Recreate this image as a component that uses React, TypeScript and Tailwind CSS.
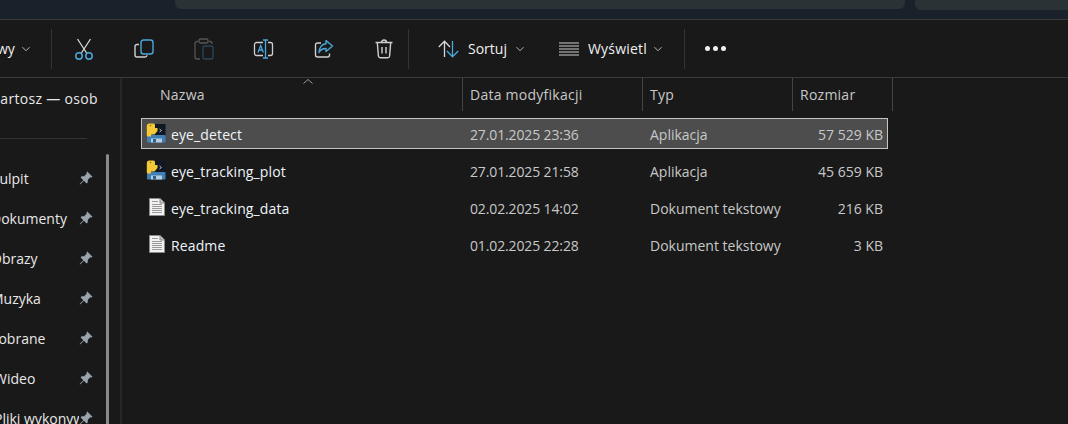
import React from "react";

const FONT = "font-['Open_Sans','Noto_Sans',sans-serif]";

function Chevron({ className = "" }: { className?: string }) {
  return (
    <svg width="8" height="6" viewBox="0 0 8 6" className={className} fill="none" stroke="#b8b8b8" strokeWidth="1">
      <path d="M0.5 1.2 4 4.7 7.5 1.2" />
    </svg>
  );
}

function Cut() {
  return (
    <svg width="20" height="22" viewBox="0 0 20 22" fill="none" strokeWidth="1.3">
      <path d="M3.5 1 12.6 15M16.5 1 7.4 15" stroke="#d8d8d8" />
      <circle cx="5" cy="18" r="3.2" stroke="#4aa8dc" strokeWidth="1.5" />
      <circle cx="15" cy="18" r="3.2" stroke="#4aa8dc" strokeWidth="1.5" />
    </svg>
  );
}

function Copy() {
  return (
    <svg width="20" height="20" viewBox="0 0 20 20" fill="none" strokeWidth="1.4">
      <path d="M5 5.5H3a2 2 0 0 0-2 2V16a2 2 0 0 0 2 2h8a2 2 0 0 0 2-1.8" stroke="#cfcfcf" />
      <rect x="7" y="1" width="12" height="14" rx="2.5" stroke="#4aa8dc" />
    </svg>
  );
}

function Paste() {
  return (
    <svg width="20" height="22" viewBox="0 0 20 22" fill="none" strokeWidth="1.3">
      <path d="M4 3.5H3a2 2 0 0 0-2 2V19a2 2 0 0 0 2 2h3M15 3.5h1a2 2 0 0 1 2 2V6" stroke="#555" />
      <rect x="5" y="1" width="9" height="4" rx="1.5" stroke="#555" />
      <rect x="9" y="8" width="10" height="13" rx="2" stroke="#28465a" />
    </svg>
  );
}

function Rename() {
  return (
    <svg width="22" height="20" viewBox="0 0 22 20" fill="none" strokeWidth="1.3">
      <path d="M10 3.5H3.5a2 2 0 0 0-2 2v9a2 2 0 0 0 2 2H10M15 3.5h2.5a2 2 0 0 1 2 2v9a2 2 0 0 1-2 2H15" stroke="#cfcfcf" />
      <path d="M12.5 1v18M10 1h5M10 19h5" stroke="#4aa8dc" />
      <path d="M5 13.5 7.7 6.5 10.4 13.5M6 11h3.4" stroke="#4aa8dc" />
    </svg>
  );
}

function Share() {
  return (
    <svg width="20" height="20" viewBox="0 0 20 20" fill="none" strokeWidth="1.4">
      <path d="M7 4H3.5a2 2 0 0 0-2 2v10a2 2 0 0 0 2 2h10a2 2 0 0 0 2-2v-1.5" stroke="#cfcfcf" />
      <path d="M12 1.5 18.5 7 12 12.5V9.5C9 9.5 6.5 10.5 5 13.5 5 8.5 8 5 12 4.7Z" stroke="#4aa8dc" strokeLinejoin="round" />
    </svg>
  );
}

function Trash() {
  return (
    <svg width="18" height="20" viewBox="0 0 18 20" fill="none" stroke="#d0d0d0" strokeWidth="1.4">
      <path d="M0.5 3.5h17M6.5 3.5C6.5 2 7.5 1 9 1s2.5 1 2.5 2.5M2.3 3.5 3.4 17a2 2 0 0 0 2 1.8h7.2a2 2 0 0 0 2-1.8l1.1-13.5M7 8v6.5M11 8v6.5" />
    </svg>
  );
}

function SortIcon() {
  return (
    <svg width="21" height="18" viewBox="0 0 21 18" fill="none" strokeWidth="1.3">
      <path d="M6.5 17V1.5M0.8 7 6.5 1.2 12 7" stroke="#d8d8d8" />
      <path d="M14.5 1v15.5M9 11l5.5 5.7L20.2 11" stroke="#4aa8dc" />
    </svg>
  );
}

function ViewIcon() {
  return (
    <svg width="20" height="14" viewBox="0 0 20 14" fill="none" stroke="#cfcfcf" strokeWidth="1">
      <path d="M0 1h20M0 4h20M0 7h20M0 10h20M0 13h20" />
    </svg>
  );
}

function Pin() {
  return (
    <svg width="14" height="14" viewBox="0 0 13 13" fill="#9aa3aa">
      <path d="M7.7 0.5 12.5 5.3 11.6 6 10.6 5.8 8.2 8.2 8.1 10.7 7 11.5 4.5 9 1 12.5 0.5 12 4 8.5 1.5 6 2.4 4.9 4.8 4.8 7.2 2.4 7 1.4Z" />
    </svg>
  );
}

function ExeIcon() {
  return (
    <svg width="20" height="20" viewBox="0 0 20 20">
      <rect x="6" y="1" width="13.5" height="12" fill="#101824" />
      <path d="M13.5 6 15.5 7.5 13.5 9" stroke="#c8c8c8" fill="none" strokeWidth="0.9" />
      <rect x="1" y="12" width="18.5" height="7.5" rx="0.8" fill="#3f7fb5" />
      <rect x="5" y="15.5" width="11" height="4" fill="#b5cde0" />
      <rect x="7" y="16" width="3" height="3.5" fill="#2f5f8a" />
      <path d="M3 0.5h4.5A1.5 1.5 0 0 1 9 2v3h2.5v3L8.5 11.5H5v2H2a1.2 1.2 0 0 1-1.2-1.2V3A2.5 2.5 0 0 1 3 0.5Z" fill="#f3c938" />
      <circle cx="4.5" cy="2.5" r="0.8" fill="#8a6a10" />
    </svg>
  );
}

function TextIcon() {
  return (
    <svg width="16" height="18" viewBox="0 0 16 18" className="ml-[3px]">
      <path d="M0.5 0.5H11L15.5 5V17.5H0.5Z" fill="#f2f2f2" stroke="#8a8a8a" />
      <path d="M11 0.5V5H15.5" fill="#c8c8c8" stroke="#8a8a8a" />
      <path d="M3 3.5h6M3 6.5h10M3 8.5h10M3 10.5h10M3 12.5h10M3 14.5h10" stroke="#9a9a9a" strokeWidth="1" />
    </svg>
  );
}

const SIDE_ITEMS = [
  { label: "Pulpit", ml: "-ml-[9px]" },
  { label: "Dokumenty", ml: "-ml-[9px]" },
  { label: "Obrazy", ml: "-ml-[9px]" },
  { label: "Muzyka", ml: "-ml-[9px]" },
  { label: "Pobrane", ml: "-ml-[10px]" },
  { label: "Wideo", ml: "-ml-[6px]" },
];

const FILES = [
  { name: "eye_detect", date: "27.01.2025 23:36", type: "Aplikacja", size: "57 529 KB", exe: true, selected: true },
  { name: "eye_tracking_plot", date: "27.01.2025 21:58", type: "Aplikacja", size: "45 659 KB", exe: true, selected: false },
  { name: "eye_tracking_data", date: "02.02.2025 14:02", type: "Dokument tekstowy", size: "216 KB", exe: false, selected: false },
  { name: "Readme", date: "01.02.2025 22:28", type: "Dokument tekstowy", size: "3 KB", exe: false, selected: false },
];

export default function App() {
  return (
    <div className={`${FONT} flex h-[424px] w-[1068px] flex-col overflow-hidden bg-[#191919] text-[14px] text-[#e8e8e8]`}>
      {/* tab strip remains */}
      <div className="flex h-[19px] shrink-0 items-start gap-[10px] bg-[#19222a] pl-[175px]">
        <div className="h-[9px] w-[730px] rounded-b-[6px] bg-[#293234]" />
        <div className="h-[10px] flex-1 rounded-bl-[6px] bg-[#293234]" />
      </div>

      {/* toolbar */}
      <div className="flex h-[59px] shrink-0 items-center border-y border-[#3a3a3a]">
        <div className="flex w-[51px] items-center overflow-hidden">
          <span className="-ml-[3px] w-[23px] text-[#f0f0f0]">wy</span>
          <Chevron className="ml-[2px]" />
        </div>
        <div className="h-[40px] w-px bg-[#333]" />
        <div className="ml-[2px] flex h-[32px] w-[60px] items-center justify-center"><Cut /></div>
        <div className="flex h-[32px] w-[60px] items-center justify-center"><Copy /></div>
        <div className="flex h-[32px] w-[60px] items-center justify-center"><Paste /></div>
        <div className="flex h-[32px] w-[60px] items-center justify-center"><Rename /></div>
        <div className="flex h-[32px] w-[60px] items-center justify-center"><Share /></div>
        <div className="flex h-[32px] w-[54px] items-center justify-center pl-[6px]"><Trash /></div>
        <div className="h-[40px] w-px bg-[#333]" />
        <div className="ml-[29px] flex items-center">
          <SortIcon />
          <span className="ml-[9px] text-[#f0f0f0]">Sortuj</span>
          <Chevron className="ml-[9px]" />
        </div>
        <div className="ml-[35px] flex items-center">
          <ViewIcon />
          <span className="ml-[9px] tracking-[0.2px] text-[#f0f0f0]">Wyświetl</span>
          <Chevron className="ml-[7px]" />
        </div>
        <div className="ml-[22px] h-[40px] w-px bg-[#333]" />
        <div className="ml-[20px] flex gap-[3px]">
          <span className="size-[5px] rounded-full bg-[#f0f0f0]" />
          <span className="size-[5px] rounded-full bg-[#f0f0f0]" />
          <span className="size-[5px] rounded-full bg-[#f0f0f0]" />
        </div>
      </div>

      <div className="flex min-h-0 flex-1">
        {/* navigation pane */}
        <div className="relative h-full w-[120px] shrink-0 overflow-hidden">
          <div className="flex h-[29px] items-end whitespace-nowrap tracking-[0.3px] text-[#e8e8e8]">
            <span className="-ml-[9px] mb-[-2px]">Bartosz — osob</span>
          </div>
          <div className="mt-[31px] h-px w-[87px] bg-[#333]" />
          <div className="-mt-px pt-[20px]">
            <div className="flex w-[93px] flex-col">
              {SIDE_ITEMS.map((item) => (
                <div key={item.label} className="flex h-[40px] items-center justify-between whitespace-nowrap">
                  <span className={item.ml}>{item.label}</span>
                  <Pin />
                </div>
              ))}
              <div className="relative flex h-[40px] items-center justify-between whitespace-nowrap">
                <span className="-ml-[6px] w-[85px] overflow-hidden">Pliki wykonywalne</span>
                <Pin />
              </div>
            </div>
          </div>
          <div className="absolute top-[76px] left-[106px] h-[300px] w-[3px] rounded-full bg-[#8a8a8a]" />
        </div>
        <div className="h-full w-[2px] shrink-0 bg-[#262626]" />

        {/* file list */}
        <div className="relative flex-1 pl-[19px]">
          <span className="absolute top-[1px] left-[181px]">
            <svg width="10" height="5" viewBox="0 0 10 5" fill="none" stroke="#9a9a9a"><path d="M0.5 4.5 5 0.5 9.5 4.5" /></svg>
          </span>
          <div className="flex h-[33px] items-stretch tracking-[0.25px] text-[#c8c8c8]">
            <div className="flex w-[322px] items-center border-r border-[#444] pl-[19px]">Nazwa</div>
            <div className="flex w-[180px] items-center border-r border-[#444] pl-[7px]">Data modyfikacji</div>
            <div className="flex w-[150px] items-center border-r border-[#444] pl-[7px]">Typ</div>
            <div className="flex w-[100px] items-center border-r border-[#444] pl-[7px]">Rozmiar</div>
          </div>
          <div className="mt-[7px] flex w-[747px] flex-col gap-[6px]">
            {FILES.map((f) => (
              <div
                key={f.name}
                className={`flex h-[31px] items-center border pt-[1px] ${f.selected ? "border-[#c4c4c4] bg-[#4d4d4d]" : "border-transparent"}`}
              >
                <div className="flex w-[321px] items-center pl-[4px]">
                  <span className="flex w-[20px] -translate-y-[1px]">{f.exe ? <ExeIcon /> : <TextIcon />}</span>
                  <span className="ml-[5px] tracking-[0.12px] text-[#eef4fa]">{f.name}</span>
                </div>
                <div className="w-[180px] pl-[7px] tracking-[-0.13px] text-[#c8c8c8]">{f.date}</div>
                <div className="w-[150px] pl-[7px] text-[#c8c8c8]">{f.type}</div>
                <div className="flex-1 pr-[4px] text-right text-[#c8c8c8]">{f.size}</div>
              </div>
            ))}
          </div>
        </div>
      </div>
    </div>
  );
}
